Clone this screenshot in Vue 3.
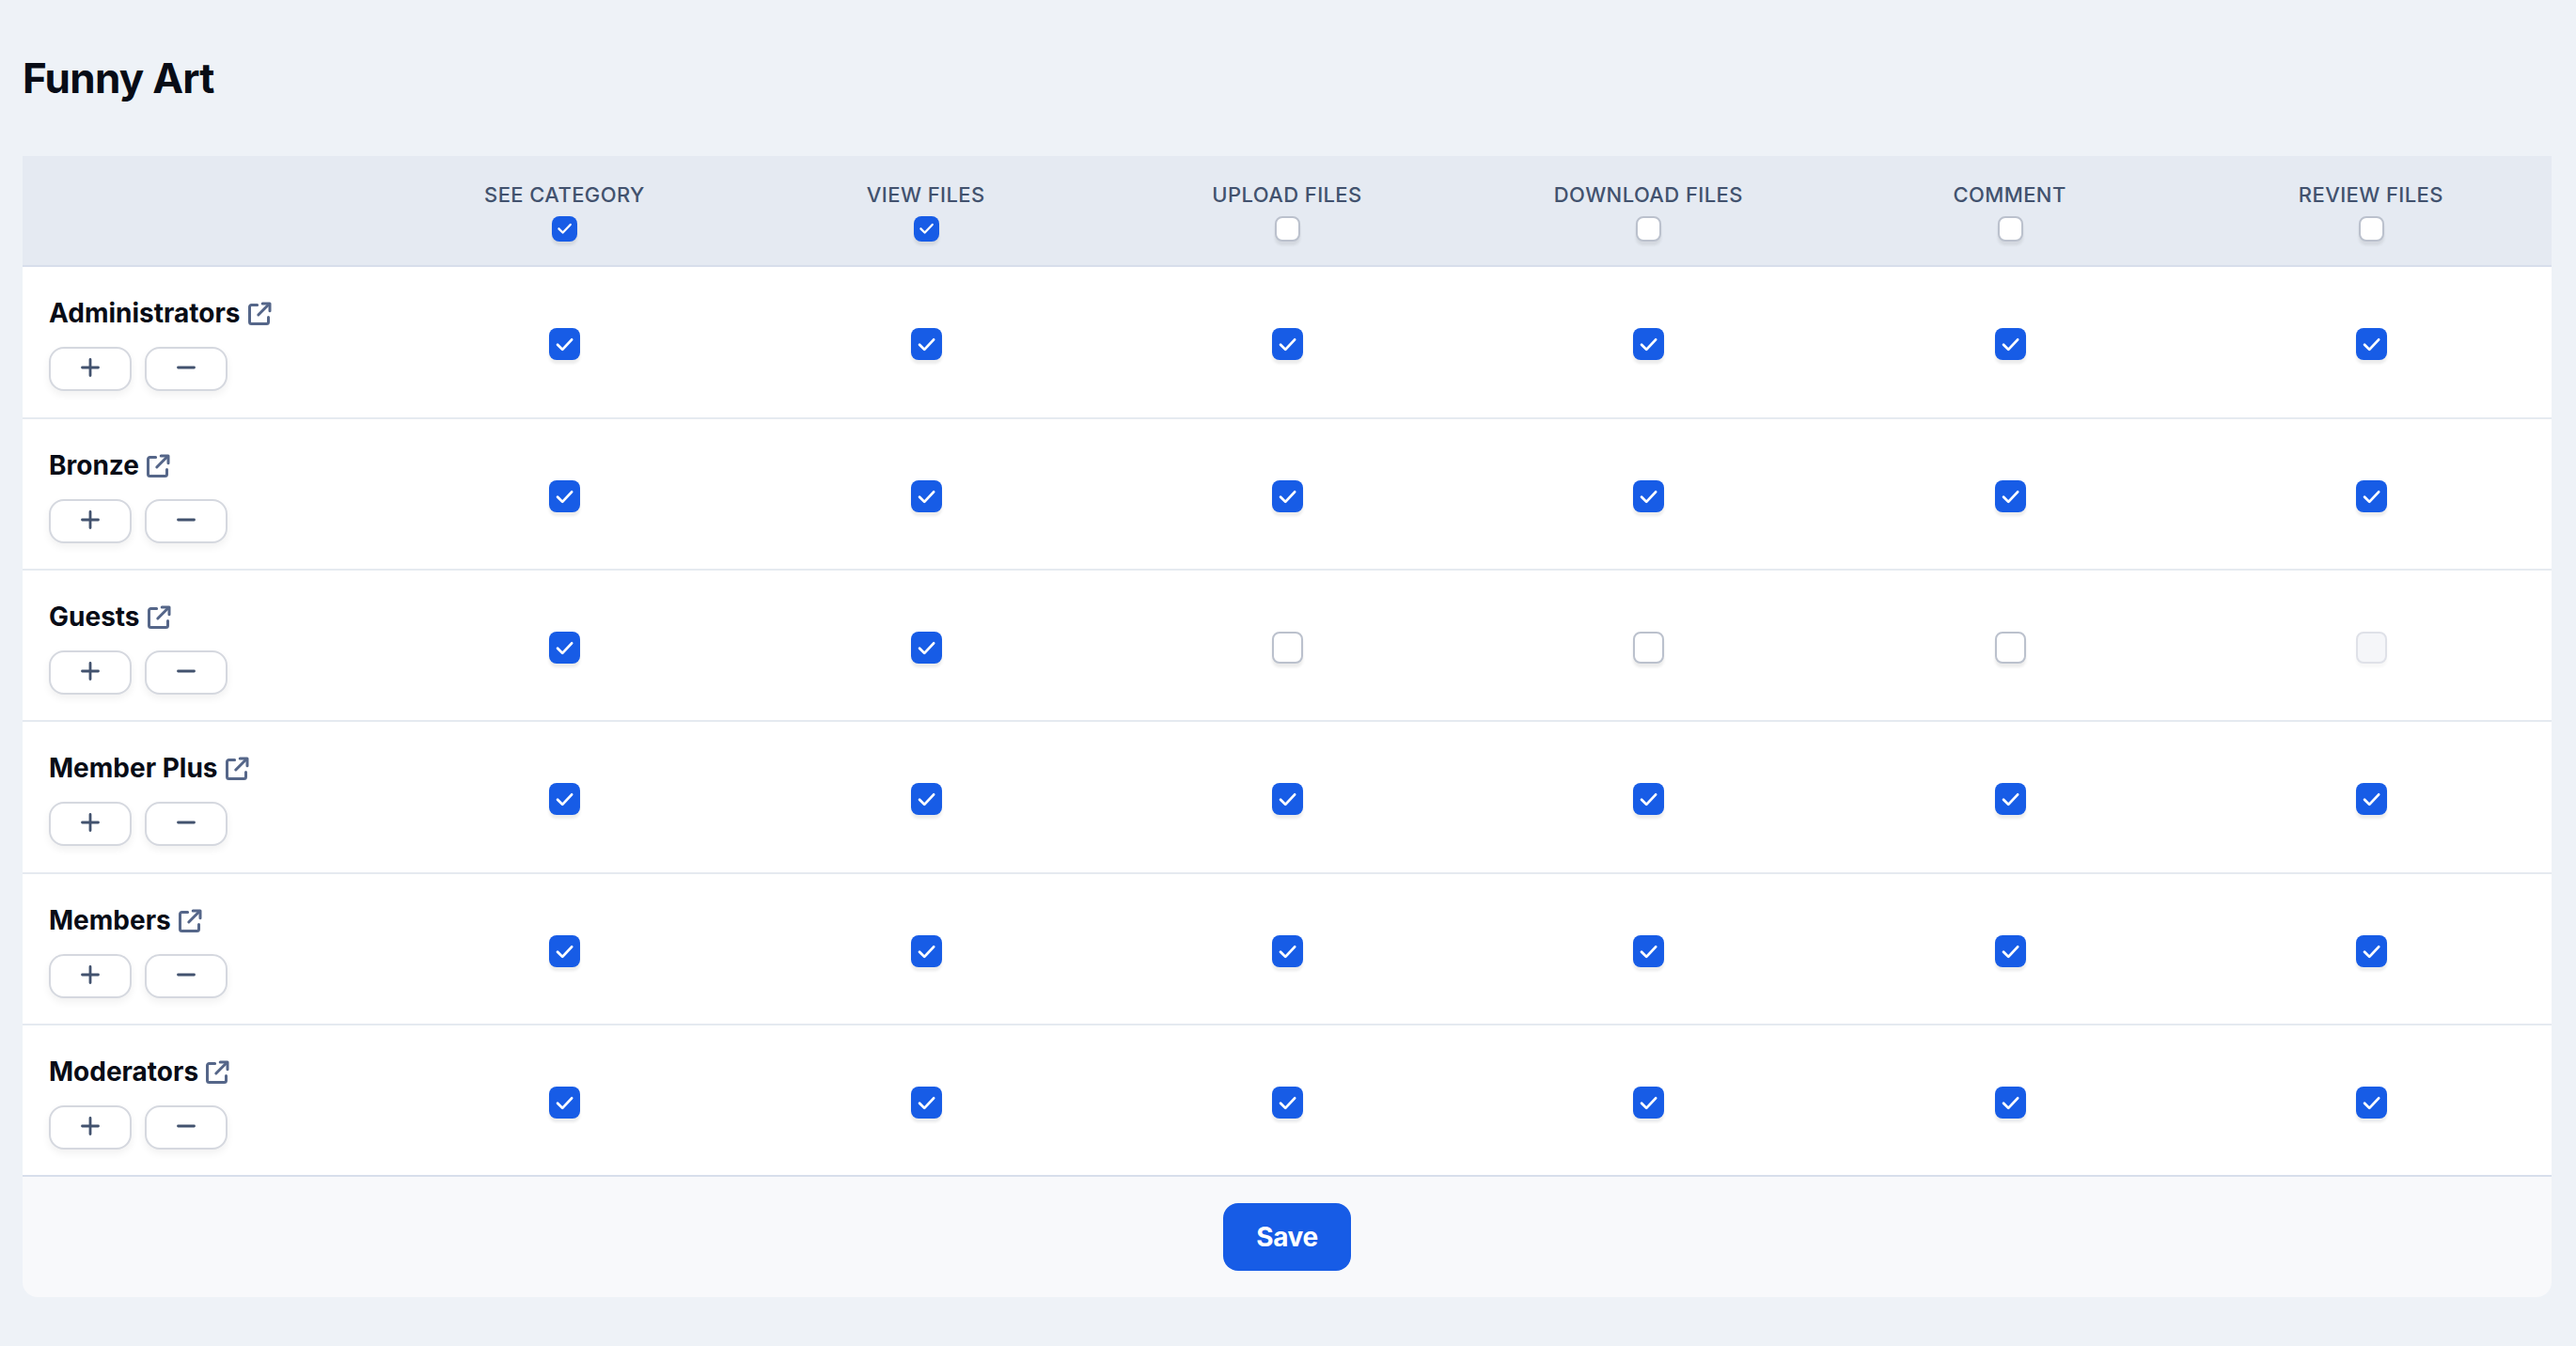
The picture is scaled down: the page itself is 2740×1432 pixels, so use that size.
<script setup>
const columns = [
  { label: 'See category', checked: true },
  { label: 'View files', checked: true },
  { label: 'Upload files', checked: false },
  { label: 'Download files', checked: false },
  { label: 'Comment', checked: false },
  { label: 'Review files', checked: false },
]

const all = ['on', 'on', 'on', 'on', 'on', 'on']
const groups = [
  { name: 'Administrators', cells: all },
  { name: 'Bronze', cells: all },
  { name: 'Guests', cells: ['on', 'on', 'off', 'off', 'off', 'disabled'] },
  { name: 'Member Plus', cells: all },
  { name: 'Members', cells: all },
  { name: 'Moderators', cells: all },
]
</script>

<template>
  <main class="page">
    <h1 class="title"><span>Funny Art</span></h1>
    <section class="matrix">
      <div class="head">
        <div></div>
        <div v-for="col in columns" :key="col.label" class="head-cell">
          <span class="head-label">{{ col.label }}</span>
          <span class="check small" :class="col.checked ? 'on' : 'off'">
            <svg v-if="col.checked" viewBox="0 0 16 16"><path d="M4.4 7.9 6.9 10.4 11.7 5.3" /></svg>
          </span>
        </div>
      </div>
      <div v-for="group in groups" :key="group.name" class="row">
        <div class="group">
          <div class="name">
            <span>{{ group.name }}</span>
            <svg class="link" viewBox="0 0 26 26">
              <path class="box" d="M10.6 3.5H4.5a2 2 0 0 0-2 2v16a2 2 0 0 0 2 2h16a2 2 0 0 0 2-2V16.5" />
              <path class="arrow" d="M11.8 14 23 2.8" />
              <path class="tip" d="M16.2 2H24V9.8" />
            </svg>
          </div>
          <div class="buttons">
            <button type="button"><svg viewBox="0 0 20 20"><path d="M10 1.5v17M1.5 10h17" /></svg></button>
            <button type="button"><svg viewBox="0 0 20 20"><path d="M1.5 10h17" /></svg></button>
          </div>
        </div>
        <div v-for="(state, i) in group.cells" :key="i" class="cell">
          <span class="check" :class="state">
            <svg v-if="state === 'on'" viewBox="0 0 16 16"><path d="M4.4 8.1 6.9 10.6 11.7 5.5" /></svg>
          </span>
        </div>
      </div>
      <footer class="foot"><button type="button" class="save">Save</button></footer>
    </section>
  </main>
</template>

<style>
body {
  background: #eef2f7;
}
</style>

<style scoped>
.page {
  box-sizing: border-box;
  height: 1432px;
  padding: 56px 26px 0 24px;
  background: #eef2f7;
  color: #080c16;
  font-family: Inter, "Liberation Sans", sans-serif;
}
.title {
  height: 110px;
  margin: 0;
  font-size: 44px;
  line-height: 54px;
  font-weight: 700;
  letter-spacing: -0.75px;
}
.head,
.row {
  display: grid;
  grid-template-columns: repeat(7, minmax(0, 1fr));
  box-sizing: border-box;
}
.head {
  height: 118px;
  background: #e5eaf2;
  border-bottom: 2px solid #d7deeb;
}
.head-cell {
  display: flex;
  flex-direction: column;
  align-items: center;
  padding-top: 27px;
}
.head-label {
  font-size: 22px;
  line-height: 28px;
  font-weight: 500;
  letter-spacing: 0.4px;
  color: #42526e;
  text-transform: uppercase;
  white-space: nowrap;
}
.row {
  height: 161px;
  background: #fff;
  border-bottom: 2px solid #e5eaf0;
}
.row:nth-child(3n + 2) {
  height: 162px;
}
.row:nth-last-child(2) {
  border-bottom-color: #d7deeb;
}
.group {
  padding: 32px 0 0 28px;
}
.name {
  display: flex;
  align-items: center;
  gap: 7px;
  height: 34px;
  font-size: 28px;
  font-weight: 700;
  white-space: nowrap;
}
.link {
  width: 26px;
  height: 26px;
  margin-top: 2px;
  fill: none;
  stroke: #556689;
  stroke-width: 3;
  stroke-linecap: round;
  stroke-linejoin: round;
}
.buttons {
  display: flex;
  gap: 14px;
  margin-top: 19px;
}
.buttons button {
  display: flex;
  justify-content: center;
  box-sizing: border-box;
  width: 88px;
  height: 47px;
  padding: 10px 0 0;
  border: 2px solid #d5d8df;
  border-radius: 16px;
  background: #fff;
  box-shadow: 0 4px 8px rgba(0, 0, 0, 0.06);
}
.buttons svg {
  width: 20px;
  height: 20px;
  fill: none;
  stroke: #42526e;
  stroke-width: 2.8;
  stroke-linecap: round;
}
.cell {
  display: flex;
  justify-content: center;
  padding-top: 65px;
}
.check {
  display: flex;
  align-items: center;
  justify-content: center;
  box-sizing: border-box;
  width: 33px;
  height: 34px;
  margin-left: 1px;
  border-radius: 8px;
  box-shadow: 0 4px 3px rgba(0, 0, 0, 0.08);
}
.check.small {
  width: 27px;
  height: 27px;
  margin-top: 9px;
}
.check.on {
  background: #175ce6;
}
.check.off {
  background: #fff;
  border: 2px solid #bbc1cd;
}
.check.disabled {
  background: #f5f6f9;
  border: 2px solid #dfe1e8;
  box-shadow: 0 4px 3px rgba(0, 0, 0, 0.03);
}
.check svg {
  width: 33px;
  height: 33px;
  fill: none;
  stroke: #fff;
  stroke-width: 1.35;
  stroke-linecap: round;
  stroke-linejoin: round;
}
.check.small svg {
  width: 27px;
  height: 27px;
}
.foot {
  display: flex;
  justify-content: center;
  box-sizing: border-box;
  height: 128px;
  padding-top: 28px;
  border-radius: 0 0 16px 16px;
  background: #f8f9fb;
}
.save {
  width: 136px;
  height: 72px;
  padding: 0;
  border: 0;
  border-radius: 16px;
  background: #175ce6;
  color: #fff;
  font: 700 28px/72px Inter, "Liberation Sans", sans-serif;
  letter-spacing: -0.4px;
}
</style>
